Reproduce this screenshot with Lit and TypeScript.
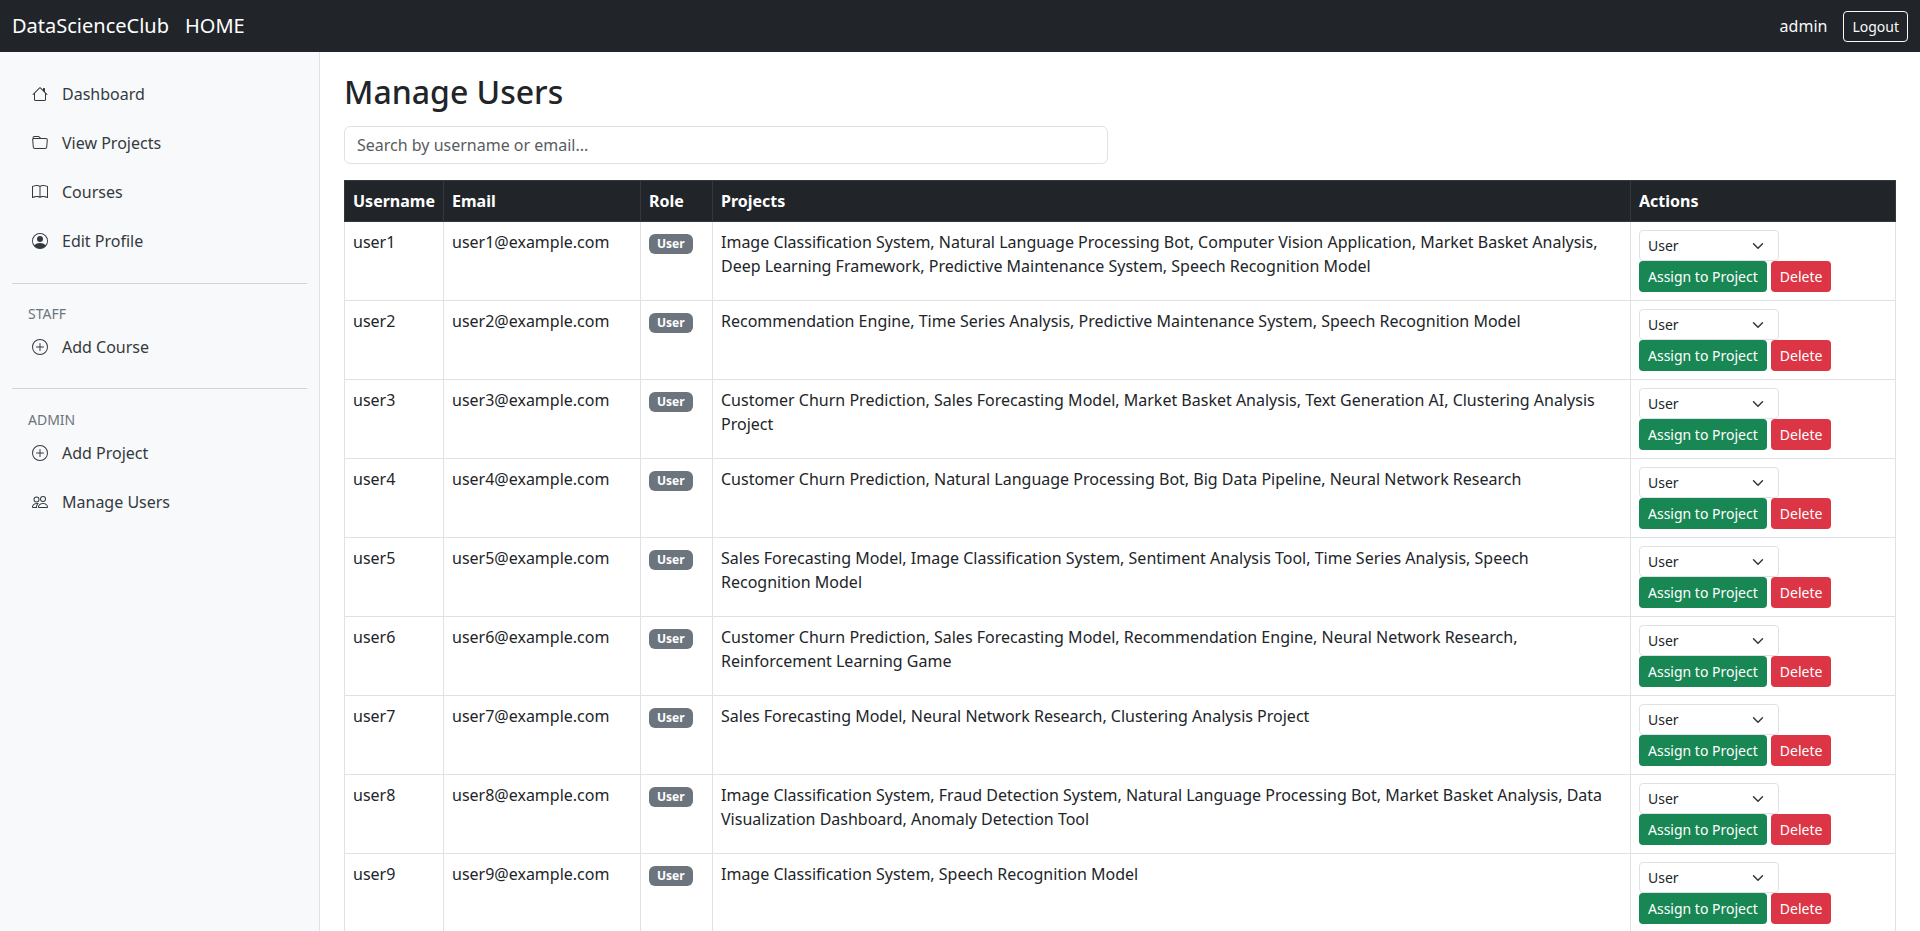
import { LitElement, css, html, svg } from 'lit';
import { customElement } from 'lit/decorators.js';

const icons: Record<string, unknown> = {
  house: svg`<path d="M8.707 1.5a1 1 0 0 0-1.414 0L.646 8.146a.5.5 0 0 0 .708.708L2 8.207V13.5A1.5 1.5 0 0 0 3.5 15h9a1.5 1.5 0 0 0 1.5-1.5V8.207l.646.647a.5.5 0 0 0 .708-.708L13 5.793V2.5a.5.5 0 0 0-.5-.5h-1a.5.5 0 0 0-.5.5v1.293L8.707 1.5ZM13 7.207V13.5a.5.5 0 0 1-.5.5h-9a.5.5 0 0 1-.5-.5V7.207l5-5 5 5Z"/>`,
  folder: svg`<path d="M.54 3.87.5 3a2 2 0 0 1 2-2h3.672a2 2 0 0 1 1.414.586l.828.828A2 2 0 0 0 9.828 3h3.982a2 2 0 0 1 1.992 2.181l-.637 7A2 2 0 0 1 13.174 14H2.826a2 2 0 0 1-1.991-1.819l-.637-7a1.99 1.99 0 0 1 .342-1.31zM2.19 4a1 1 0 0 0-.996 1.09l.637 7a1 1 0 0 0 .995.91h10.348a1 1 0 0 0 .995-.91l.637-7A1 1 0 0 0 13.81 4H2.19zm4.69-1.707A1 1 0 0 0 6.172 2H2.5a1 1 0 0 0-1 .981l.006.139C1.72 3.042 1.95 3 2.19 3h5.396l-.707-.707z"/>`,
  book: svg`<path d="M1 2.828c.885-.37 2.154-.769 3.388-.893 1.33-.134 2.458.063 3.112.752v9.746c-.935-.53-2.12-.603-3.213-.493-1.18.12-2.37.461-3.287.811V2.828zm7.5-.141c.654-.689 1.782-.886 3.112-.752 1.234.124 2.503.523 3.388.893v9.923c-.918-.35-2.107-.692-3.287-.81-1.094-.111-2.278-.039-3.213.492V2.687zM8 1.783C7.015.936 5.587.81 4.287.94c-1.514.153-3.042.672-3.994 1.105A.5.5 0 0 0 0 2.5v11a.5.5 0 0 0 .707.455c.882-.4 2.303-.881 3.68-1.02 1.409-.142 2.59.087 3.223.877a.5.5 0 0 0 .78 0c.633-.79 1.814-1.019 3.222-.877 1.378.139 2.8.62 3.681 1.02A.5.5 0 0 0 16 13.5v-11a.5.5 0 0 0-.293-.455c-.952-.433-2.48-.952-3.994-1.105C10.413.809 8.985.936 8 1.783z"/>`,
  person: svg`<path d="M11 6a3 3 0 1 1-6 0 3 3 0 0 1 6 0z"/><path fill-rule="evenodd" d="M0 8a8 8 0 1 1 16 0A8 8 0 0 1 0 8zm8-7a7 7 0 0 0-5.468 11.37C3.242 11.226 4.805 10 8 10s4.757 1.225 5.468 2.37A7 7 0 0 0 8 1z"/>`,
  plus: svg`<path d="M8 15A7 7 0 1 1 8 1a7 7 0 0 1 0 14zm0 1A8 8 0 1 0 8 0a8 8 0 0 0 0 16z"/><path d="M8 4a.5.5 0 0 1 .5.5v3h3a.5.5 0 0 1 0 1h-3v3a.5.5 0 0 1-1 0v-3h-3a.5.5 0 0 1 0-1h3v-3A.5.5 0 0 1 8 4z"/>`,
  people: svg`<path d="M15 14s1 0 1-1-1-4-5-4-5 3-5 4 1 1 1 1h8Zm-7.978-1A.261.261 0 0 1 7 12.996c.001-.264.167-1.03.76-1.72C8.312 10.629 9.282 10 11 10c1.717 0 2.687.63 3.24 1.276.593.69.758 1.457.76 1.72l-.008.002a.274.274 0 0 1-.014.002H7.022ZM11 7a2 2 0 1 0 0-4 2 2 0 0 0 0 4Zm3-2a3 3 0 1 1-6 0 3 3 0 0 1 6 0ZM6.936 9.28a5.88 5.88 0 0 0-1.23-.247A7.35 7.35 0 0 0 5 9c-4 0-5 3-5 4 0 .667.333 1 1 1h4.216A2.238 2.238 0 0 1 5 13c0-1.01.377-2.042 1.09-2.904.243-.294.526-.569.846-.816ZM4.92 10A5.493 5.493 0 0 0 4 13H1c0-.26.164-1.03.76-1.724.545-.636 1.492-1.256 3.16-1.275ZM1.5 5.5a3 3 0 1 1 6 0 3 3 0 0 1-6 0Zm3-2a2 2 0 1 0 0 4 2 2 0 0 0 0-4Z"/>`,
};

const users = [
  ['user1', 'Image Classification System, Natural Language Processing Bot, Computer Vision Application, Market Basket Analysis, Deep Learning Framework, Predictive Maintenance System, Speech Recognition Model'],
  ['user2', 'Recommendation Engine, Time Series Analysis, Predictive Maintenance System, Speech Recognition Model'],
  ['user3', 'Customer Churn Prediction, Sales Forecasting Model, Market Basket Analysis, Text Generation AI, Clustering Analysis Project'],
  ['user4', 'Customer Churn Prediction, Natural Language Processing Bot, Big Data Pipeline, Neural Network Research'],
  ['user5', 'Sales Forecasting Model, Image Classification System, Sentiment Analysis Tool, Time Series Analysis, Speech Recognition Model'],
  ['user6', 'Customer Churn Prediction, Sales Forecasting Model, Recommendation Engine, Neural Network Research, Reinforcement Learning Game'],
  ['user7', 'Sales Forecasting Model, Neural Network Research, Clustering Analysis Project'],
  ['user8', 'Image Classification System, Fraud Detection System, Natural Language Processing Bot, Market Basket Analysis, Data Visualization Dashboard, Anomaly Detection Tool'],
  ['user9', 'Image Classification System, Speech Recognition Model'],
];

@customElement('app-root')
export class AppRoot extends LitElement {
  static styles = css`
    :host {
      display: flex;
      flex-direction: column;
      height: 100vh;
      overflow: hidden;
      font-family: system-ui, 'Noto Sans', sans-serif;
      font-size: 16px;
      line-height: 1.5;
      color: #212529;
      background: #fff;
    }

    * {
      box-sizing: border-box;
    }

    .navbar {
      flex: none;
      height: 52px;
      display: flex;
      align-items: center;
      padding: 0 12px;
      background: #212529;
      color: #fff;
    }

    .brand {
      font-size: 20px;
      margin-right: 16px;
    }

    .home {
      font-size: 20px;
    }

    .spacer {
      flex: 1;
    }

    .who {
      color: #f8f9fa;
      margin-right: 16px;
    }

    .logout {
      font: inherit;
      font-size: 14px;
      line-height: 21px;
      padding: 4px 8px;
      color: #f8f9fa;
      background: transparent;
      border: 1px solid #f8f9fa;
      border-radius: 4px;
    }

    .body {
      flex: 1;
      min-height: 0;
      display: flex;
    }

    .sidebar {
      flex: none;
      width: 320px;
      padding: 18px 12px;
      background: #f8f9fa;
      border-right: 1px solid #dee2e6;
    }

    .link {
      display: flex;
      align-items: center;
      gap: 14px;
      height: 48px;
      margin-bottom: 1px;
      padding-left: 20px;
      color: #343a40;
    }

    .link svg {
      flex: none;
      width: 16px;
      height: 16px;
      fill: currentColor;
    }

    .sidebar hr {
      margin: 18px 0 20px;
      border: 0;
      border-top: 1px solid #ced4da;
    }

    .sidebar hr.second {
      margin: 17px 0 21px;
    }

    .section {
      padding-left: 16px;
      font-size: 14px;
      line-height: 19px;
      color: #6c757d;
    }

    .main {
      flex: 1;
      min-width: 0;
      padding: 21px 24px 24px;
      overflow: hidden;
    }

    h1 {
      margin: 0 0 15px;
      font-size: 32px;
      font-weight: 500;
      line-height: 38px;
    }

    .search {
      display: block;
      width: 764px;
      height: 38px;
      margin-bottom: 16px;
      padding: 6px 12px;
      font: inherit;
      color: #212529;
      background: #fff;
      border: 1px solid #dee2e6;
      border-radius: 6px;
    }

    .search::placeholder {
      color: #595c5f;
      opacity: 1;
    }

    table {
      width: 100%;
      table-layout: fixed;
      border-collapse: collapse;
    }

    th,
    td {
      padding: 8px;
      text-align: left;
      vertical-align: top;
      border: 1px solid #dee2e6;
    }

    th {
      font-weight: 700;
      color: #fff;
      background: #212529;
      border-color: #32383e;
    }

    .col-name {
      width: 99px;
    }

    .col-email {
      width: 197px;
    }

    .col-role {
      width: 72px;
    }

    .col-actions {
      width: 265px;
    }

    .badge {
      display: inline-block;
      padding: 4px 8px;
      font-size: 12px;
      font-weight: 700;
      line-height: 1;
      color: #fff;
      background: #6c757d;
      border-radius: 6px;
    }

    .role-select {
      display: block;
      width: 140px;
      height: 31px;
      padding: 4px 36px 4px 8px;
      font: inherit;
      font-size: 14px;
      line-height: 21px;
      color: #212529;
      appearance: none;
      background: #fff url("data:image/svg+xml,%3csvg xmlns='http://www.w3.org/2000/svg' viewBox='0 0 16 16'%3e%3cpath fill='none' stroke='%23343a40' stroke-linecap='round' stroke-linejoin='round' stroke-width='2' d='m2 5 6 6 6-6'/%3e%3c/svg%3e") no-repeat right 12px center / 16px 12px;
      border: 1px solid #dee2e6;
      border-radius: 4px;
    }

    .buttons {
      display: flex;
      gap: 4px;
    }

    .btn {
      font: inherit;
      font-size: 14px;
      line-height: 21px;
      padding: 4px 8px;
      color: #fff;
      border: 1px solid transparent;
      border-radius: 4px;
    }

    .assign {
      background: #198754;
    }

    .delete {
      background: #dc3545;
    }
  `;

  private link(icon: string, label: string) {
    return html`<div class="link"><svg viewBox="0 0 16 16">${icons[icon]}</svg>${label}</div>`;
  }

  render() {
    return html`
      <nav class="navbar">
        <span class="brand">DataScienceClub</span>
        <span class="home">HOME</span>
        <span class="spacer"></span>
        <span class="who">admin</span>
        <button class="logout">Logout</button>
      </nav>
      <div class="body">
        <aside class="sidebar">
          ${this.link('house', 'Dashboard')}
          ${this.link('folder', 'View Projects')}
          ${this.link('book', 'Courses')}
          ${this.link('person', 'Edit Profile')}
          <hr />
          <div class="section">STAFF</div>
          ${this.link('plus', 'Add Course')}
          <hr class="second" />
          <div class="section">ADMIN</div>
          ${this.link('plus', 'Add Project')}
          ${this.link('people', 'Manage Users')}
        </aside>
        <main class="main">
          <h1>Manage Users</h1>
          <input class="search" placeholder="Search by username or email..." />
          <table>
            <thead>
              <tr>
                <th class="col-name">Username</th>
                <th class="col-email">Email</th>
                <th class="col-role">Role</th>
                <th>Projects</th>
                <th class="col-actions">Actions</th>
              </tr>
            </thead>
            <tbody>
              ${users.map(
                ([name, projects]) => html`
                  <tr>
                    <td>${name}</td>
                    <td>${name}@example.com</td>
                    <td><span class="badge">User</span></td>
                    <td>${projects}</td>
                    <td>
                      <select class="role-select">
                        <option>User</option>
                        <option>Staff</option>
                        <option>Admin</option>
                      </select>
                      <div class="buttons">
                        <button class="btn assign">Assign to Project</button>
                        <button class="btn delete">Delete</button>
                      </div>
                    </td>
                  </tr>
                `,
              )}
            </tbody>
          </table>
        </main>
      </div>
    `;
  }
}
